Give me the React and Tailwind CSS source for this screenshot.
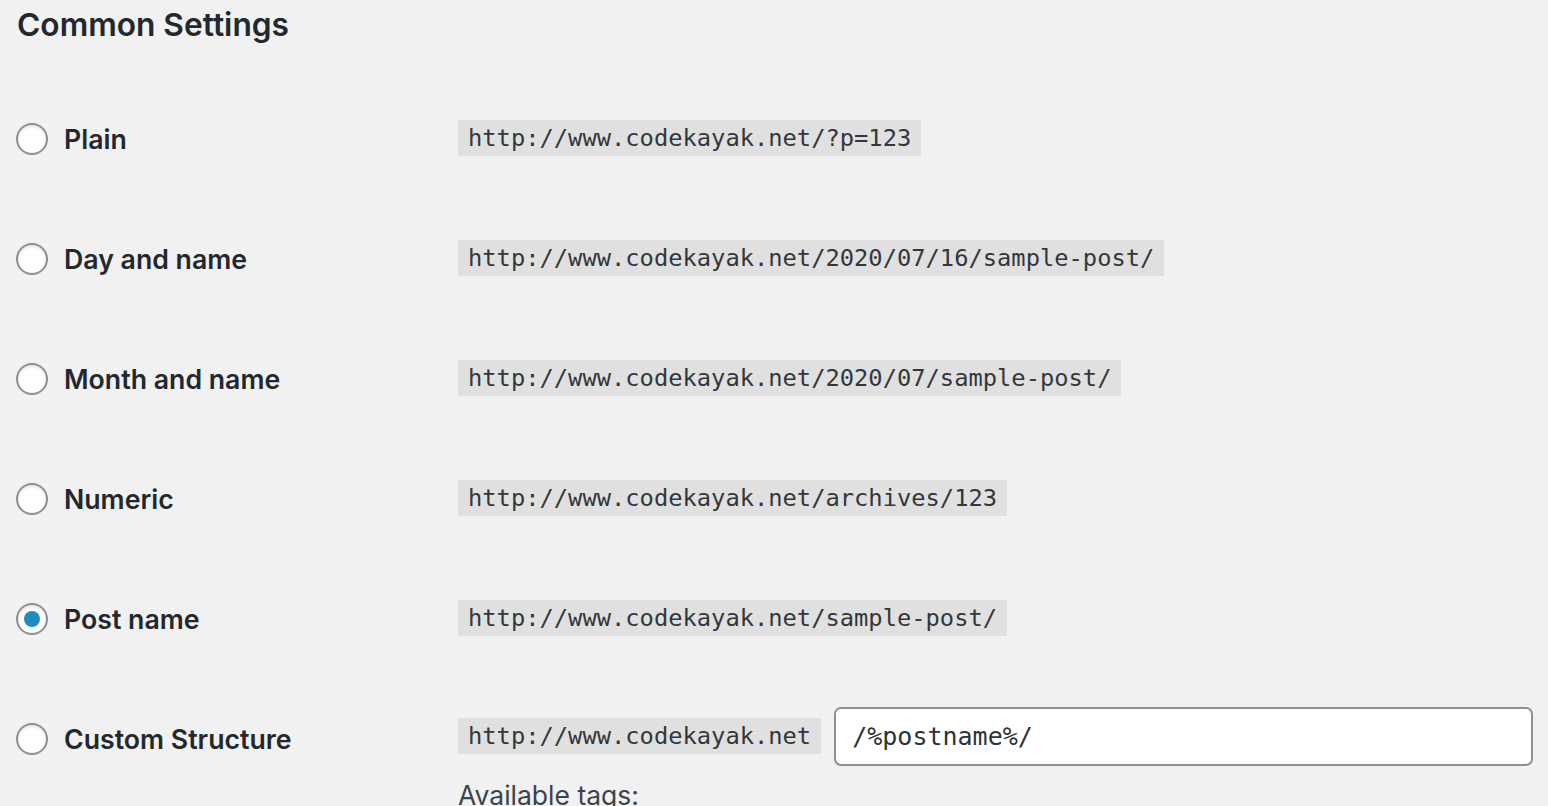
import React, { useState } from 'react';

const OPTIONS = [
  { id: 'plain', label: 'Plain', url: 'http://www.codekayak.net/?p=123' },
  { id: 'day', label: 'Day and name', url: 'http://www.codekayak.net/2020/07/16/sample-post/' },
  { id: 'month', label: 'Month and name', url: 'http://www.codekayak.net/2020/07/sample-post/' },
  { id: 'numeric', label: 'Numeric', url: 'http://www.codekayak.net/archives/123' },
  { id: 'post', label: 'Post name', url: 'http://www.codekayak.net/sample-post/' },
];

const sans = 'font-["Inter","Noto_Sans",sans-serif]';
const mono = 'font-["DejaVu_Sans_Mono","Liberation_Mono",monospace]';

function Radio({ checked, onClick }) {
  return (
    <button
      onClick={onClick}
      className="w-[32px] h-[32px] shrink-0 rounded-full border-2 border-[#8c8f94] bg-white shadow-[inset_0_2px_3px_rgba(0,0,0,0.1)] flex items-center justify-center"
    >
      {checked && <span className="w-[16px] h-[16px] rounded-full bg-[#1e8cbe]" />}
    </button>
  );
}

function Code({ children }) {
  return (
    <code className={`${mono} bg-[#e0e0e0] text-[#32373c] text-[23.75px] leading-[36px] px-[10px] inline-block whitespace-nowrap`}>
      {children}
    </code>
  );
}

export default function App() {
  const [selected, setSelected] = useState('post');
  const [custom, setCustom] = useState('/%postname%/');

  return (
    <div className={`${sans} bg-[#f1f1f1] w-[1548px] h-[806px] overflow-hidden text-[#23282d] pl-[16px]`}>
      <div className="h-[79px] pt-[1px]">
        <h2 className="text-[31.7px] font-semibold leading-[48px] pl-[1px]">Common Settings</h2>
      </div>

      {OPTIONS.map(opt => (
        <div key={opt.id} className="h-[120px] flex items-center">
          <div className="w-[442px] flex items-center gap-[16px]">
            <Radio checked={selected === opt.id} onClick={() => setSelected(opt.id)} />
            <span className="text-[26.7px] font-semibold">{opt.label}</span>
          </div>
          <div className="-mt-[3px]">
            <Code>{opt.url}</Code>
          </div>
        </div>
      ))}

      <div className="pt-[28px] flex items-center">
        <div className="w-[442px] flex items-center gap-[16px] mt-[6px]">
          <Radio checked={selected === 'custom'} onClick={() => setSelected('custom')} />
          <span className="text-[26.7px] font-semibold">Custom Structure</span>
        </div>
        <div className="flex items-center gap-[13px]">
          <div className="-mt-[2px]">
            <Code>http://www.codekayak.net</Code>
          </div>
          <input
            value={custom}
            onChange={e => setCustom(e.target.value)}
            className={`${mono} w-[699px] h-[59px] bg-white border-2 border-[#8c8f94] rounded-[7px] px-[16px] text-[25px] text-[#2c3338] outline-none`}
          />
        </div>
      </div>
      <div className="pl-[442px] mt-[9px] text-[26.5px] leading-[40px] text-[#3c434a]">Available tags:</div>
    </div>
  );
}
